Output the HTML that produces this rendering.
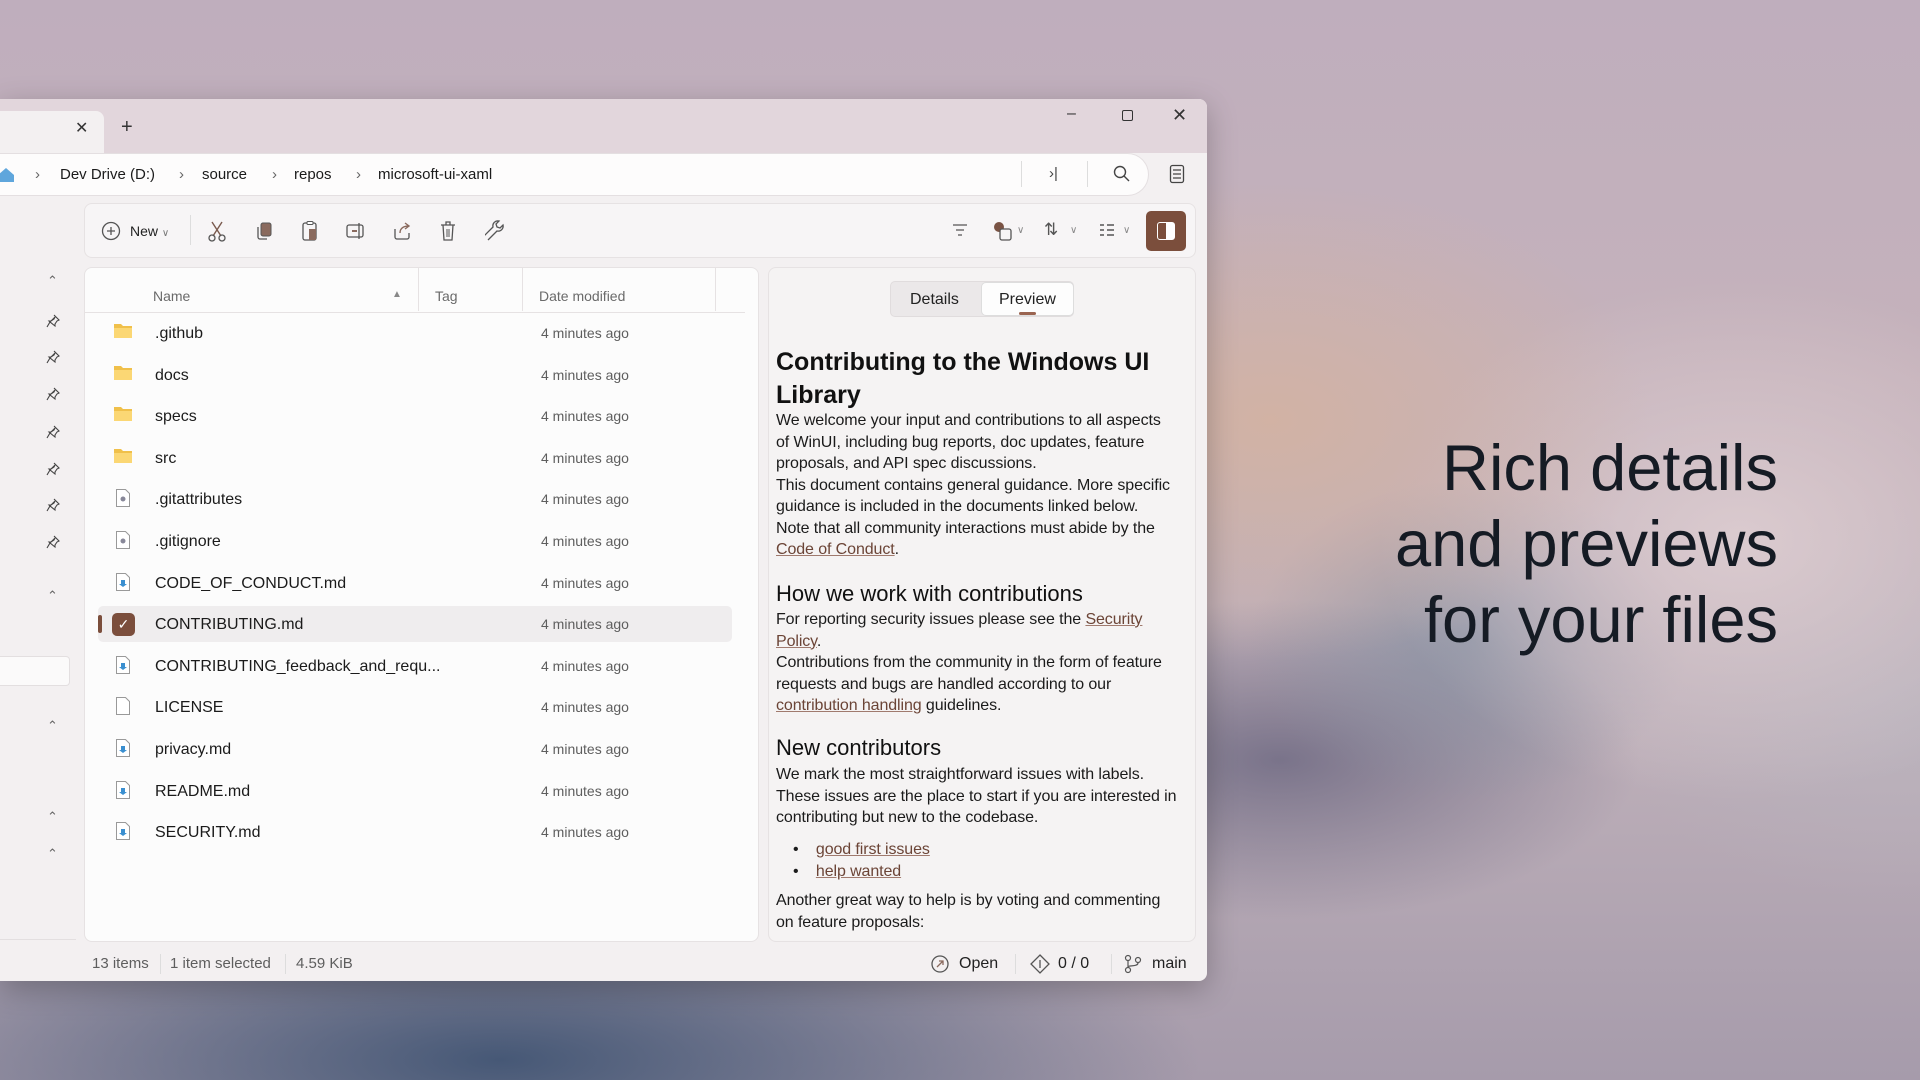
<!DOCTYPE html>
<html><head><meta charset="utf-8"><style>
*{margin:0;padding:0;box-sizing:border-box}
body{width:1920px;height:1080px;overflow:hidden;position:relative;font-family:"Liberation Sans",sans-serif;
background:
radial-gradient(ellipse 380px 240px at 1270px 420px,rgba(212,178,160,.85),rgba(212,178,160,0)),
radial-gradient(ellipse 360px 260px at 1740px 540px,rgba(220,204,208,.95),rgba(220,204,208,0)),
radial-gradient(ellipse 220px 160px at 1470px 640px,rgba(130,142,160,.75),rgba(130,142,160,0)),
radial-gradient(ellipse 360px 160px at 1280px 760px,rgba(110,105,130,.85),rgba(110,105,130,0)),
radial-gradient(ellipse 300px 200px at 1900px 700px,rgba(185,180,190,.8),rgba(185,180,190,0)),
radial-gradient(ellipse 700px 200px at 500px 1060px,rgba(70,88,118,1),rgba(70,88,118,0)),
linear-gradient(180deg,#bfaebd 0%,#c5b2bb 35%,#bcaeb8 70%,#a69bab 100%);}
.a{position:absolute;white-space:nowrap}
.win{position:absolute;left:0;top:99px;width:1207px;height:882px;background:#f3f0f1;border-radius:0 8px 8px 0;box-shadow:0 8px 30px rgba(0,0,0,.25);overflow:hidden}
.tb{position:absolute;left:0;top:0;width:100%;height:54px;background:#e2d6dc}
.tab{position:absolute;left:0;top:12px;width:104px;height:42px;background:#f3f0f1;border-radius:0 8px 0 0}
.addr{position:absolute;left:0;top:54px;width:1149px;height:43px;background:#fdfcfc;border-radius:0 22px 22px 0;border:1px solid #e4dfe1;border-left:none}
.t14{font-size:15px;color:#1b1b1b}
.toolbar{position:absolute;left:84px;top:104px;width:1112px;height:55px;background:#f7f5f6;border:1px solid #e6e2e3;border-radius:8px}
.list{position:absolute;left:84px;top:168px;width:675px;height:675px;background:#fcfcfc;border:1px solid #e6e2e3;border-radius:8px}
.prev{position:absolute;left:768px;top:168px;width:428px;height:675px;background:#f5f3f3;border:1px solid #e6e2e3;border-radius:8px}
.row{position:absolute;left:0;font-size:16px;color:#1b1b1b}
.date{position:absolute;font-size:14px;color:#5e5e5e}
.ptxt{font-size:16px;color:#1b1b1b;letter-spacing:-.1px}
.lk{color:#6b4436;text-decoration:underline;text-decoration-color:#a07a6e}
.st{font-size:15px;color:#5e5e5e}
svg{position:absolute}
</style></head><body>
<div class="a" style="right:142px;top:430px;text-align:right;font-size:65px;line-height:76px;color:#151b24">Rich details<br>and previews<br>for your files</div>

<div class="win">
 <div class="tb"></div>
 <div class="tab"></div>
 <div class="a" style="left:75px;top:19px;font-size:16px;color:#333">✕</div>
 <div class="a" style="left:121px;top:17px;font-size:20px;color:#333;font-weight:300">+</div>
 <div class="a" style="left:1067px;top:6px;font-size:16px;color:#333">–</div>
 <div style="position:absolute;left:1122px;top:11px;width:11px;height:11px;border:1.3px solid #333;border-radius:2px"></div>
 <div class="a" style="left:1172px;top:6px;font-size:18px;color:#333">✕</div>

 <div class="addr"></div>
 <svg style="left:0;top:67px" width="16" height="18" viewBox="0 0 16 18"><path d="M-2 9 L6 2 L14 9 V16 H-2Z" fill="#5fa6dc"/></svg>
 <div class="a t14" style="left:35px;top:67px;color:#666">›</div>
 <div class="a t14" style="left:60px;top:67px">Dev Drive (D:)</div>
 <div class="a t14" style="left:179px;top:67px;color:#666">›</div>
 <div class="a t14" style="left:202px;top:67px">source</div>
 <div class="a t14" style="left:272px;top:67px;color:#666">›</div>
 <div class="a t14" style="left:294px;top:67px">repos</div>
 <div class="a t14" style="left:356px;top:67px;color:#666">›</div>
 <div class="a t14" style="left:378px;top:67px">microsoft-ui-xaml</div>
 <div style="position:absolute;left:1021px;top:62px;width:1px;height:26px;background:#ddd"></div>
 <div class="a t14" style="left:1049px;top:66px;color:#444">›|</div>
 <div style="position:absolute;left:1087px;top:62px;width:1px;height:26px;background:#ddd"></div>
 <svg style="left:1113px;top:66px" width="18" height="18" viewBox="0 0 18 18"><circle cx="7" cy="7" r="5.5" fill="none" stroke="#444" stroke-width="1.4"/><path d="M11 11 L16 16" stroke="#444" stroke-width="1.4"/></svg>
 <svg style="left:1169px;top:65px" width="16" height="20" viewBox="0 0 16 20"><rect x="1.5" y="1.5" width="13" height="17" rx="2" fill="none" stroke="#444" stroke-width="1.3"/><path d="M4 6h8M4 10h8M4 14h8" stroke="#444" stroke-width="1.2"/></svg>

 <div class="toolbar"></div>
 <svg style="left:101px;top:122px" width="20" height="20" viewBox="0 0 20 20"><circle cx="10" cy="10" r="8.5" fill="none" stroke="#555" stroke-width="1.3"/><path d="M10 6v8M6 10h8" stroke="#555" stroke-width="1.3"/></svg>
 <div class="a" style="left:130px;top:124px;font-size:14px;color:#222">New <span style="font-size:10px;color:#777">∨</span></div>
 <div style="position:absolute;left:190px;top:116px;width:1px;height:30px;background:#ddd"></div>
 <svg style="left:207px;top:121px" width="20" height="22" viewBox="0 0 20 22"><path d="M5 2 L14 16 M15 2 L6 16" stroke="#7a5a4e" stroke-width="1.4" fill="none"/><circle cx="5" cy="18" r="3" fill="none" stroke="#555" stroke-width="1.3"/><circle cx="15" cy="18" r="3" fill="none" stroke="#555" stroke-width="1.3"/></svg>
 <svg style="left:254px;top:122px" width="20" height="20" viewBox="0 0 20 20"><rect x="7" y="2" width="10" height="13" rx="2" fill="#8a6a5e" stroke="#555"/><path d="M4 6v10a2 2 0 0 0 2 2h7" fill="none" stroke="#555" stroke-width="1.3"/></svg>
 <svg style="left:300px;top:121px" width="20" height="22" viewBox="0 0 20 22"><rect x="3" y="3" width="13" height="17" rx="2" fill="none" stroke="#555" stroke-width="1.3"/><rect x="7" y="1.5" width="6" height="3" rx="1" fill="#fff" stroke="#555"/><rect x="9" y="9" width="7" height="11" fill="#8a6a5e"/></svg>
 <svg style="left:345px;top:122px" width="20" height="20" viewBox="0 0 20 20"><rect x="2" y="4" width="16" height="12" rx="2" fill="none" stroke="#555" stroke-width="1.3"/><path d="M7 10h5" stroke="#8a6a5e" stroke-width="2"/><path d="M14 2v16" stroke="#555" stroke-width="1.3"/></svg>
 <svg style="left:392px;top:122px" width="20" height="20" viewBox="0 0 20 20"><path d="M3 8v8a2 2 0 0 0 2 2h10a2 2 0 0 0 2-2v-4" fill="none" stroke="#555" stroke-width="1.3"/><path d="M8 12c0-5 4-7 9-7M13 2l4 3-4 3" fill="none" stroke="#8a6a5e" stroke-width="1.4"/></svg>
 <svg style="left:438px;top:121px" width="20" height="22" viewBox="0 0 20 22"><path d="M3 5h14M8 5V2h4v3M5 5l1 15h8l1-15" fill="none" stroke="#555" stroke-width="1.3"/><path d="M9 9v8M11 9v8" stroke="#555"/></svg>
 <svg style="left:485px;top:121px" width="20" height="22" viewBox="0 0 20 22"><path d="M3 20l9-9a5 5 0 0 0 6-6l-3 3-3-1-1-3 3-3a5 5 0 0 0-6 6l-9 9" fill="none" stroke="#555" stroke-width="1.3"/></svg>
 <svg style="left:952px;top:124px" width="16" height="14" viewBox="0 0 16 14"><path d="M1 2h14M4 7h8M6 12h4" stroke="#555" stroke-width="1.3"/></svg>
 <svg style="left:992px;top:121px" width="22" height="22" viewBox="0 0 22 22"><circle cx="7" cy="7" r="5" fill="#7a5344"/><rect x="8" y="9" width="11" height="11" rx="2" fill="#f7f5f6" stroke="#555" stroke-width="1.3"/></svg>
 <div class="a" style="left:1017px;top:126px;font-size:10px;color:#888">∨</div>
 <div class="a" style="left:1044px;top:121px;font-size:17px;color:#555">⇅</div>
 <div class="a" style="left:1070px;top:126px;font-size:10px;color:#888">∨</div>
 <svg style="left:1099px;top:124px" width="16" height="14" viewBox="0 0 16 14"><path d="M1 2h4M1 7h4M1 12h4M8 2h7M8 7h7M8 12h7" stroke="#555" stroke-width="1.4"/></svg>
 <div class="a" style="left:1123px;top:126px;font-size:10px;color:#888">∨</div>
 <div style="position:absolute;left:1146px;top:112px;width:40px;height:40px;border-radius:5px;background:#7b4e3c"></div>
 <div style="position:absolute;left:1157px;top:123px;width:18px;height:18px;border:1.5px solid #fff;border-radius:3px"></div>
 <div style="position:absolute;left:1166px;top:124px;width:8px;height:16px;background:#fff"></div>

 <div class="a" style="left:47px;top:174px;font-size:13px;color:#666">⌃</div>
 <div class="a" style="left:47px;top:489px;font-size:13px;color:#666">⌃</div>
 <div class="a" style="left:47px;top:619px;font-size:13px;color:#666">⌃</div>
 <div class="a" style="left:47px;top:710px;font-size:13px;color:#666">⌃</div>
 <div class="a" style="left:47px;top:747px;font-size:13px;color:#666">⌃</div>
 <div style="position:absolute;left:0;top:557px;width:70px;height:30px;background:#fbfafa;border:1px solid #e3dfe0;border-left:none;border-radius:0 4px 4px 0"></div>
 <div style="position:absolute;left:0;top:840px;width:76px;height:1px;background:#e3dfe0"></div>

 <div class="list"></div>
 <div class="a" style="left:153px;top:189px;font-size:14px;color:#6a6a6a">Name</div>
 <div class="a" style="left:392px;top:190px;font-size:10px;color:#888">▲</div>
 <div style="position:absolute;left:418px;top:168px;width:1px;height:44px;background:#e6e2e3"></div>
 <div class="a" style="left:435px;top:189px;font-size:14px;color:#6a6a6a">Tag</div>
 <div style="position:absolute;left:522px;top:168px;width:1px;height:44px;background:#e6e2e3"></div>
 <div class="a" style="left:539px;top:189px;font-size:14px;color:#6a6a6a">Date modified</div>
 <div style="position:absolute;left:715px;top:168px;width:1px;height:44px;background:#e6e2e3"></div>
 <div style="position:absolute;left:85px;top:213px;width:660px;height:1px;background:#e6e2e3"></div>
 <div style="position:absolute;left:98px;top:507px;width:634px;height:36px;background:#efedee;border-radius:5px"></div>
 <div style="position:absolute;left:98px;top:516px;width:4px;height:18px;background:#7b4e3c;border-radius:2px"></div>
 <div style="position:absolute;left:112px;top:514px;width:23px;height:23px;background:#7b4e3c;border-radius:5px;color:#fff;font-size:14px;text-align:center;line-height:23px">✓</div>

 <div class="prev"></div>
 <div style="position:absolute;left:890px;top:182px;width:184px;height:36px;background:#ebe8e9;border-radius:5px;border:1px solid #e0dcdd"></div>
 <div style="position:absolute;left:981px;top:183px;width:93px;height:34px;background:#fdfdfd;border-radius:5px;border:1px solid #ddd"></div>
 <div style="position:absolute;left:1019px;top:213px;width:17px;height:3px;background:#9a6450;border-radius:2px"></div>
 <div class="a" style="left:910px;top:192px;font-size:16px;color:#222">Details</div>
 <div class="a" style="left:999px;top:192px;font-size:16px;color:#222">Preview</div>

 <div class="a" style="left:776px;top:247px;font-size:25px;font-weight:bold;color:#111;line-height:33px">Contributing to the Windows UI<br>Library</div>
 <div class="a ptxt" style="left:776px;top:311px;line-height:21.5px">We welcome your input and contributions to all aspects<br>of WinUI, including bug reports, doc updates, feature<br>proposals, and API spec discussions.<br>This document contains general guidance. More specific<br>guidance is included in the documents linked below.<br>Note that all community interactions must abide by the<br><span class="lk">Code of Conduct</span>.</div>
 <div class="a" style="left:776px;top:482px;font-size:22px;color:#111">How we work with contributions</div>
 <div class="a ptxt" style="left:776px;top:510px;line-height:21.5px">For reporting security issues please see the <span class="lk">Security</span><br><span class="lk">Policy</span>.<br>Contributions from the community in the form of feature<br>requests and bugs are handled according to our<br><span class="lk">contribution handling</span> guidelines.</div>
 <div class="a" style="left:776px;top:636px;font-size:22px;color:#111">New contributors</div>
 <div class="a ptxt" style="left:776px;top:665px;line-height:21.5px">We mark the most straightforward issues with labels.<br>These issues are the place to start if you are interested in<br>contributing but new to the codebase.</div>
 <div class="a ptxt" style="left:793px;top:740px;line-height:21.5px">•&nbsp;&nbsp;&nbsp;&nbsp;<span class="lk">good first issues</span><br>•&nbsp;&nbsp;&nbsp;&nbsp;<span class="lk">help wanted</span></div>
 <div class="a ptxt" style="left:776px;top:791px;line-height:21.5px">Another great way to help is by voting and commenting<br>on feature proposals:</div>

 <div class="a st" style="left:92px;top:856px">13 items</div>
 <div style="position:absolute;left:160px;top:855px;width:1px;height:20px;background:#ddd"></div>
 <div class="a st" style="left:170px;top:856px">1 item selected</div>
 <div style="position:absolute;left:285px;top:855px;width:1px;height:20px;background:#ddd"></div>
 <div class="a st" style="left:296px;top:856px">4.59 KiB</div>
 <svg style="left:930px;top:855px" width="20" height="20" viewBox="0 0 20 20"><circle cx="10" cy="10" r="8" fill="none" stroke="#555" stroke-width="1.3"/><path d="M7 13l6-6M9 7h4v4" fill="none" stroke="#8a6a5e" stroke-width="1.3"/></svg>
 <div class="a" style="left:959px;top:856px;font-size:16px;color:#222">Open</div>
 <div style="position:absolute;left:1015px;top:855px;width:1px;height:20px;background:#ddd"></div>
 <svg style="left:1030px;top:855px" width="20" height="20" viewBox="0 0 20 20"><path d="M10 1L19 10 10 19 1 10Z" fill="none" stroke="#555" stroke-width="1.3"/><path d="M10 6v8" stroke="#555" stroke-width="1.3"/></svg>
 <div class="a" style="left:1058px;top:856px;font-size:16px;color:#222">0 / 0</div>
 <div style="position:absolute;left:1111px;top:855px;width:1px;height:20px;background:#ddd"></div>
 <svg style="left:1124px;top:855px" width="18" height="20" viewBox="0 0 18 20"><circle cx="4" cy="4" r="2.5" fill="none" stroke="#555" stroke-width="1.2"/><circle cx="4" cy="16" r="2.5" fill="none" stroke="#555" stroke-width="1.2"/><circle cx="14" cy="6" r="2.5" fill="none" stroke="#555" stroke-width="1.2"/><path d="M4 7v6M14 9c0 4-10 2-10 4" fill="none" stroke="#555" stroke-width="1.2"/></svg>
 <div class="a" style="left:1152px;top:856px;font-size:16px;color:#222">main</div>
</div>

<script>
var w=document.querySelector('.win');
var pins=[320,356,393,431,468,504,541];
pins.forEach(function(y){w.insertAdjacentHTML('beforeend','<svg style="left:46px;top:'+(y-99-6)+'px" width="14" height="14" viewBox="0 0 14 14"><path d="M8 1l5 5-2 1-2 3v2L4 8 1 13M4 8l-1-1h2l3-2 1-2z" fill="none" stroke="#444" stroke-width="1.1"/></svg>');});
var rows=[['.github','f'],['docs','f'],['specs','f'],['src','f'],['.gitattributes','g'],['.gitignore','g'],['CODE_OF_CONDUCT.md','m'],['CONTRIBUTING.md','s'],['CONTRIBUTING_feedback_and_requ...','m'],['LICENSE','l'],['privacy.md','m'],['README.md','m'],['SECURITY.md','m']];
rows.forEach(function(r,i){var cy=333+i*41.6-99;var h='';
if(r[1]=='f')h+='<svg style="left:114px;top:'+(cy-10)+'px" width="18" height="16" viewBox="0 0 18 16"><path d="M0 1h7l2 2h9v12H0z" fill="#f0c04a"/><path d="M0 5h18v10H0z" fill="#fbd774"/></svg>';
else if(r[1]!='s')h+='<svg style="left:116px;top:'+(cy-10)+'px" width="14" height="18" viewBox="0 0 14 18"><path d="M.5.5h9l4 4v13H.5z" fill="#fff" stroke="#999"/>'+(r[1]=='g'?'<circle cx="7" cy="10" r="2.5" fill="#889"/>':r[1]=='m'?'<path d="M5 7h4v4h2l-4 3-4-3h2z" fill="#3a8fd0"/>':'')+'</svg>';
h+='<div class="a row" style="left:155px;top:'+(cy-8)+'px">'+r[0]+'</div><div class="a date" style="left:541px;top:'+(cy-8)+'px">4 minutes ago</div>';
w.insertAdjacentHTML('beforeend',h);});
</script>
</body></html>
